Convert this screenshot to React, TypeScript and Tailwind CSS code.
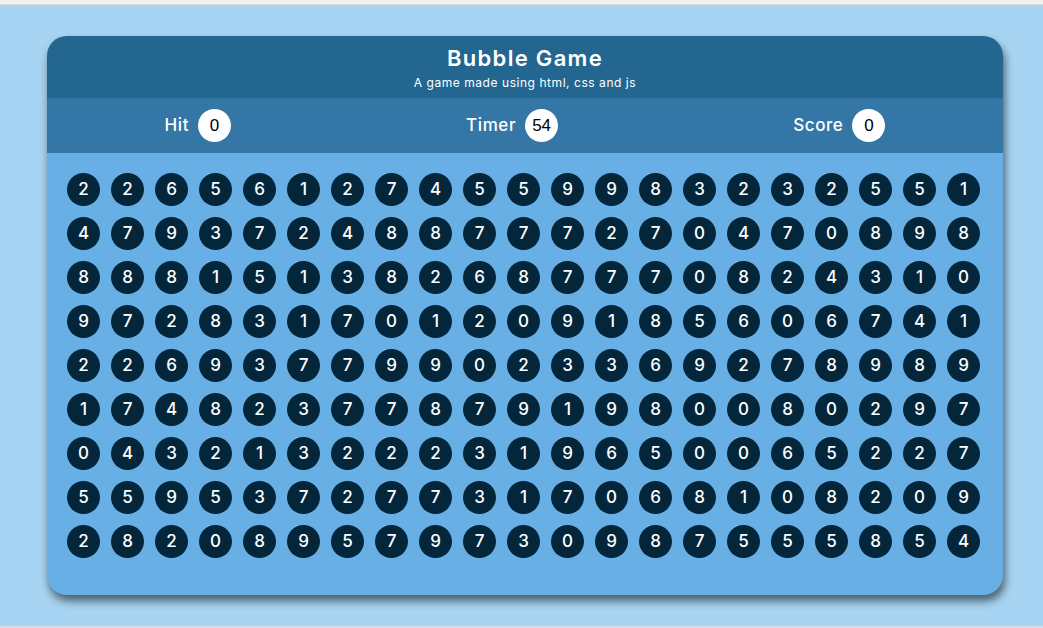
const rows = [
  '226561274559983232551',
  '479372488777270470898',
  '888151382687770824310',
  '972831701209185606741',
  '226937799023369278989',
  '174823778791980080297',
  '043213222319650065227',
  '559537277317068108209',
  '282089579730987555854',
];

const Stat = ({ label, value }: { label: string; value: string }) => (
  <div className="flex items-center gap-[9px]">
    <span className="pt-[1px] text-[17px] font-medium tracking-[0.6px] text-white">{label}</span>
    <span className="flex h-[33px] w-[33px] items-center justify-center rounded-full bg-white font-['Liberation_Sans',sans-serif] text-[17px] text-black">
      {value}
    </span>
  </div>
);

export default function App() {
  return (
    <div className="flex h-[628px] w-[1043px] flex-col bg-[#a7d4f2] font-['Inter','Noto_Sans',sans-serif]">
      <div className="h-[5px] border-b border-[#dcdcdc] bg-[#f1f1f1]" />
      <div className="flex-1 pl-[47px] pt-[31px]">
        <div className="h-[559px] w-[956px] overflow-hidden rounded-[20px] bg-[#67afe4] shadow-[2px_6px_8px_rgba(0,0,0,0.55)]">
          <header className="flex h-[62px] flex-col items-center bg-[#236791] pt-[8px] text-white">
            <h1 className="text-[22px] font-semibold leading-[28px] tracking-[1.3px]">Bubble Game</h1>
            <p className="mt-[3px] text-[12px] leading-[16px] tracking-[0.55px]">A game made using html, css and js</p>
          </header>
          <div className="flex h-[55px] items-center justify-around bg-[#3476a6]">
            <Stat label="Hit" value="0" />
            <Stat label="Timer" value="54" />
            <Stat label="Score" value="0" />
          </div>
          <div className="grid grid-cols-[repeat(21,33px)] gap-x-[11px] gap-y-[11px] pl-[20px] pt-[20px]">
            {rows.flatMap((r, i) =>
              r.split('').map((d, j) => (
                <div
                  key={`${i}-${j}`}
                  className="flex h-[33px] w-[33px] items-center justify-center rounded-full bg-[#03263b] text-[17px] font-medium text-white"
                >
                  {d}
                </div>
              ))
            )}
          </div>
        </div>
      </div>
      <div className="h-[2px] bg-[#d9dde3]" />
    </div>
  );
}
